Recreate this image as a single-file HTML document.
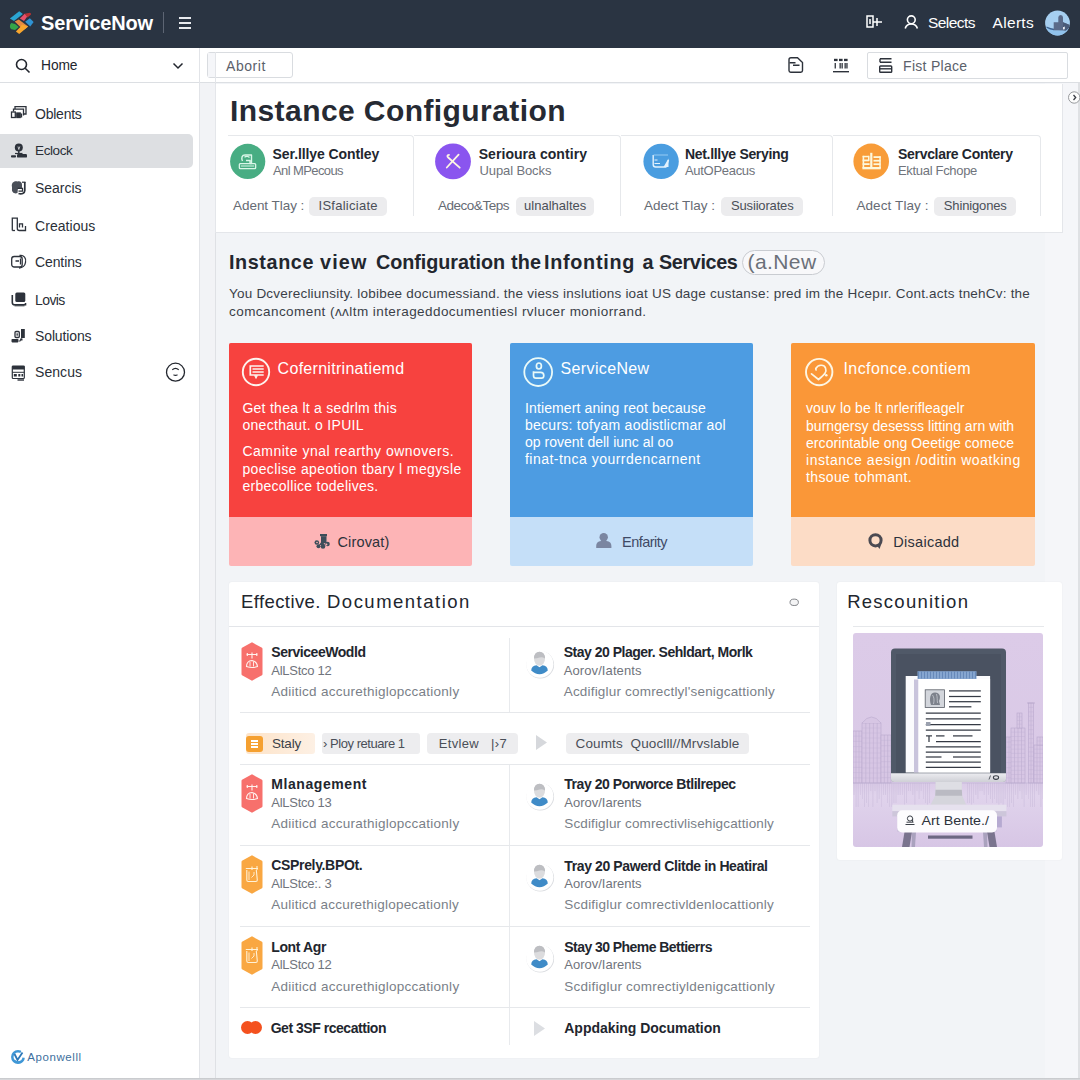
<!DOCTYPE html>
<html><head><meta charset="utf-8">
<style>
*{box-sizing:border-box;margin:0;padding:0}
html,body{width:1080px;height:1080px;overflow:hidden;background:#f2f4f7;font-family:"Liberation Sans",sans-serif;color:#22262e}
div,span,svg{position:absolute}
.t{white-space:nowrap;line-height:20px;margin-top:-10px}
#hdr{left:0;top:0;width:1080px;height:48px;background:#2a3442;z-index:5}
#side{left:0;top:47px;width:200px;height:1033px;background:#fff;border-right:1px solid #e2e4e8}
#strip{left:200px;top:83px;width:16px;height:997px;background:#f2f3f6;border-right:1px solid #dfe1e5}
#bot{left:0;top:1078px;width:1080px;height:2px;background:linear-gradient(#c4c6c9,#dcdde0);z-index:9}
#rstrip{left:1045px;top:83px;width:35px;height:997px;background:#f5f6f9;border-right:2px solid #dfe1e4}
#tool{left:200px;top:47px;width:880px;height:36px;background:#fff;border-bottom:1px solid #dcdfe3}
.nav{left:35px;font-size:14px;color:#2a2f38}
.card{background:#fff}
</style></head><body>
<!--HEADER-->
<div id="hdr">
  <svg style="left:0;top:0" width="44" height="44" viewBox="0 0 44 44">
    <path d="M9.900 18.400 L19.200 11.200 L22.900 14 L14 21 Z" fill="#2aa5d2"/>
    <path d="M19.900 18.400 L24.700 13.800 L27.500 16.200 L24 21 Z" fill="#e8506a"/>
    <path d="M24.700 13.800 L29.900 12.700 Q31.400 13.200 31 14.400 L27.500 17.500 Z" fill="#b93232"/>
    <path d="M25.100 21.800 L29.900 18.300 L33.600 22.100 L30.300 26.600 Z" fill="#2f93d3"/>
    <path d="M9.900 26.200 Q10 23.500 11.400 22.900 L15.100 24 L18.800 27 L15.100 29.900 L11.400 29.200 Q9.800 28 9.900 26.200 Z" fill="#35a548"/>
    <path d="M14.700 21.400 L18.800 19.600 L28.100 26.600 L24.500 29.500 L20.300 27 Z" fill="#e58a42"/>
    <path d="M28.100 26.600 L19.200 34 L15.900 31.400 L20.300 27 L22 24.500 Z" fill="#f8a62e"/>
  </svg>
  <span class="t" style="left:41.0px;top:23.3px;font-size:20px;font-weight:bold;color:#fff;letter-spacing:-0.139px">ServiceNow</span>
  <div style="left:163px;top:12px;width:1px;height:21px;background:#5d6573"></div>
  <div style="left:179px;top:17px;width:12px;height:2px;background:#e8eaee"></div>
  <div style="left:179px;top:22px;width:12px;height:2px;background:#e8eaee"></div>
  <div style="left:179px;top:27px;width:12px;height:2px;background:#e8eaee"></div>
  <svg style="left:866px;top:15px" width="18" height="14" viewBox="0 0 18 14" fill="none" stroke="#fff" stroke-width="1.5"><path d="M1 1 H7 V12 H1 Z M4 4 V9 M7 7 H11 M11 3 V11 M11 7 H16"/></svg>
  <svg style="left:904px;top:14px" width="15" height="16" viewBox="0 0 15 16" fill="none" stroke="#fff" stroke-width="1.6"><circle cx="7.3" cy="5.8" r="3.9"/><path d="M1.2 14.500 C2.2 11 4.500 10 7.3 10 C10.1 10 12.4 11 13.4 14.500"/></svg>
  <span class="t" style="left:928.0px;top:22.5px;font-size:15.500px;color:#fff;letter-spacing:-0.549px">Selects</span>
  <span class="t" style="left:992.6px;top:22.5px;font-size:15.500px;color:#fff;letter-spacing:0.296px">Alerts</span>
  <svg style="left:1044px;top:10px" width="27" height="27" viewBox="0 0 27 27"><defs><clipPath id="avc"><circle cx="13.500" cy="13" r="12.400"/></clipPath></defs><g clip-path="url(#avc)"><rect width="27" height="27" fill="#a6cff0"/><path d="M1 17 Q8 20 14 20.500 L26 18 V27 H1 Z" fill="#90c2ec"/><path d="M2.500 16.600 Q7 18.600 10 18.800 L10 20.300 Q6 20 2.500 17.800 Z" fill="#3d6290"/><path d="M9.700 20.300 V12.300 H14.300 V7.500 Q14.300 5 16.700 5 Q19 5 19 7.500 V12.300 L24.500 14.500 L26 17 L22 20.500 Z" fill="#5a6a88"/><path d="M19 12.300 L26 15 V17.500 L21.500 20.500 L19 20 Z" fill="#4a5b78"/><path d="M19 17.300 L20.800 16.600 L20.800 19.300 L19 19.600 Z" fill="#eef2f7"/></g></svg>
  </div>
</div>
<!--SIDEBAR-->
<div id="side">
  <div style="left:0;top:0;width:199px;height:36px;border-bottom:1px solid #dcdfe3"></div>
  <svg style="left:15px;top:11px" width="16" height="16" viewBox="0 0 16 16" fill="none" stroke="#22262e" stroke-width="1.6"><circle cx="6.5" cy="6.5" r="5"/><path d="M10.200 10.200 L14.500 14.500"/></svg>
  <span class="t" style="left:41.1px;top:19.0px;font-size:13.8px;color:#22262e;letter-spacing:-0.153px">Home</span>
  <svg style="left:172px;top:15px" width="12" height="8" viewBox="0 0 12 8" fill="none" stroke="#22262e" stroke-width="1.5"><path d="M1.500 1.500 L6 6 L10.500 1.500"/></svg>

  <div style="left:0;top:87px;width:193px;height:34px;background:#dddfe2;border-radius:0 5px 5px 0"></div>
  <span class="t nav" style="top:66.7px;letter-spacing:-0.236px">Oblents</span>
  <span class="t nav" style="top:104.3px;font-size:13.5px;letter-spacing:-0.378px">Eclock</span>
  <span class="t nav" style="top:141.0px;letter-spacing:-0.012px">Searcis</span>
  <span class="t nav" style="top:178.5px;letter-spacing:0.053px">Creatious</span>
  <span class="t nav" style="top:215.2px;letter-spacing:-0.110px">Centins</span>
  <span class="t nav" style="top:252.6px;letter-spacing:-0.597px">Lovis</span>
  <span class="t nav" style="top:289.3px;letter-spacing:-0.122px">Solutions</span>
  <span class="t nav" style="top:325.4px;letter-spacing:0.066px">Sencus</span>
<!--NAVICONS-->
  <svg style="left:10px;top:58px" width="18" height="16" viewBox="0 0 18 16" fill="none" stroke="#2d323b" stroke-width="1.300"><path d="M5 4 V1.700 H16 V9 H13.500"/><path d="M3.500 6.500 V4.200 H13.500 V10.500"/><rect x="1.500" y="7" width="3.800" height="5.500"/><rect x="6.800" y="8" width="3.400" height="4.500" fill="#2d323b"/><path d="M11.500 12.500 V8.500"/></svg>
  <svg style="left:10px;top:95px" width="18" height="18" viewBox="0 0 18 18"><circle cx="8.800" cy="5.600" r="4" fill="#2d323b"/><path d="M8 4.500 L8.800 7.500 L9.800 4.500" fill="none" stroke="#dddfe2" stroke-width="0.8"/><path d="M8.800 9 V12" stroke="#2d323b" stroke-width="1.500"/><rect x="7" y="12" width="10" height="3.600" rx="1.200" fill="#2d323b"/><rect x="1" y="13.200" width="5" height="2.400" rx="0.800" fill="#2d323b"/><path d="M5 11.500 H12.500" stroke="#2d323b" stroke-width="1.200"/></svg>
  <svg style="left:10px;top:132px" width="18" height="18" viewBox="0 0 18 18"><path d="M2 8 C1 4 4 1.500 7.500 2.500 C10 1.500 12.500 3.500 12 6.500 L12 9 L8 9 L7.500 14 C4.500 15.500 1.500 13 2 10 Z" fill="#4a4f58"/><path d="M14.800 3 V11.500 C14.800 14.500 11.500 15.500 8.500 14.500" fill="none" stroke="#2d323b" stroke-width="1.700"/><path d="M7.500 9.300 H12.500 V12.200 H8.500" fill="none" stroke="#2d323b" stroke-width="1.300"/><path d="M12 3.200 H15.500" stroke="#2d323b" stroke-width="1.200"/></svg>
  <svg style="left:10px;top:169px" width="18" height="18" viewBox="0 0 18 18" fill="none" stroke="#2d323b" stroke-width="1.300"><path d="M2.300 14.500 V2.200 H7.300 V12.500 Q7.300 14.500 9.300 14.500 H15.500 V10"/><path d="M2.300 14.500 H5"/><path d="M9.500 11.500 V7.800 H12.500 V11.500"/></svg>
  <svg style="left:10px;top:206px" width="18" height="18" viewBox="0 0 18 18" fill="none" stroke="#2d323b" stroke-width="1.300"><rect x="1.700" y="3.500" width="10.500" height="10.500" rx="2.500"/><path d="M9.500 2.500 C14 2 16.500 5 15.500 9.500 C15 12.500 12.500 14.800 9 15"/><path d="M5.500 8 H9 M10.500 5.500 V11.500"/></svg>
  <svg style="left:10px;top:243px" width="18" height="18" viewBox="0 0 18 18"><rect x="5.300" y="2.500" width="10" height="9.500" rx="1.500" fill="#2d323b"/><path d="M2.300 5 V12.500 Q2.300 14.800 4.600 14.800 H15.500 V13" fill="none" stroke="#2d323b" stroke-width="1.600"/><path d="M4.500 15.800 H14.500" stroke="#2d323b" stroke-width="1"/></svg>
  <svg style="left:10px;top:280px" width="18" height="18" viewBox="0 0 18 18"><rect x="11" y="2" width="3.800" height="9" fill="#2d323b"/><rect x="5" y="4.500" width="4.300" height="6" rx="1" fill="none" stroke="#2d323b" stroke-width="1.300"/><rect x="6.500" y="6.300" width="1.300" height="2.400" fill="#2d323b"/><rect x="1.500" y="12" width="7" height="3.400" rx="0.800" fill="#2d323b"/><path d="M9.500 14.500 L11.500 11.500" stroke="#2d323b" stroke-width="1.300"/><rect x="10.500" y="11.500" width="2" height="2" fill="#2d323b"/></svg>
  <svg style="left:10px;top:317px" width="18" height="18" viewBox="0 0 18 18"><rect x="2.300" y="2" width="12" height="12.500" rx="0.800" fill="none" stroke="#2d323b" stroke-width="1.200"/><rect x="2.300" y="2" width="12" height="3.500" fill="#2d323b"/><path d="M2.300 8.300 H14.300" stroke="#2d323b" stroke-width="1"/><rect x="3.800" y="10" width="3" height="2.500" fill="#2d323b"/><rect x="8.300" y="10" width="2" height="2.500" fill="#2d323b"/><rect x="11.500" y="10" width="1.600" height="2.500" fill="#2d323b"/><path d="M7.500 16 H14" stroke="#2d323b" stroke-width="1.400"/></svg>
  <svg style="left:165px;top:315px" width="21" height="21" viewBox="0 0 21 21" fill="none" stroke="#22262e" stroke-width="1.300"><circle cx="10.500" cy="10.200" r="9"/><path d="M7.300 7.800 Q10.500 5 13.700 7.800" stroke-width="1.200"/><path d="M8.500 12.800 Q10.500 14 12.500 12.800" stroke-width="1.200"/></svg>
  <svg style="left:10px;top:1002px" width="16" height="16" viewBox="0 0 16 16"><circle cx="8" cy="8" r="5.700" fill="none" stroke="#3f97d6" stroke-width="2.500"/><path d="M8 8 L12 1 L16 4 L16 9 Z" fill="#fff"/><path d="M4.500 5 L7.500 11 L12.500 3.500" fill="none" stroke="#2d78b8" stroke-width="1.800"/><path d="M4 11.500 Q7 14.500 11 12.500" fill="none" stroke="#3f97d6" stroke-width="2"/></svg>
  <span class="t" style="left:27.2px;top:1009.7px;font-size:11.500px;color:#3d6f9e;letter-spacing:0.585px">Aponwelll</span>
</div>
<!--TOOLBAR-->
<div id="tool">
  <div style="left:7px;top:5px;width:86px;height:26px;border:1px solid #d9dce0;border-radius:3px"></div><div style="left:8px;top:6px;width:8px;height:24px;background:#f5f6f9"></div><div style="left:15px;top:5px;width:1px;height:31px;background:#e3e5e9"></div>
  <span class="t" style="left:26.0px;top:18.7px;font-size:14px;color:#5b616b;letter-spacing:0.570px">Aborit</span>
  <div style="left:667px;top:5px;width:201px;height:27px;border:1px solid #d9dce0;border-radius:2px"></div>
  <span class="t" style="left:703.1px;top:18.8px;font-size:14px;color:#5b616b;letter-spacing:0.283px">Fist Place</span>
  <svg style="left:587px;top:9px" width="18" height="18" viewBox="0 0 18 18" fill="none" stroke="#2d323b" stroke-width="1.400"><path d="M2 3.800 Q2 1.800 4 1.800 H10.500 L15.500 6.500 V14.500 Q15.500 16.200 13.800 16.200 H3.700 Q2 16.200 2 14.500 Z"/><path d="M2.500 6.700 H8.500 M6 9.300 H12.500"/></svg>
  <svg style="left:632px;top:10px" width="18" height="18" viewBox="0 0 18 18" fill="#2d323b" stroke="none"><rect x="2" y="1.800" width="3.600" height="2.300"/><rect x="7" y="1.800" width="3.600" height="2.300"/><rect x="12" y="1.800" width="3.600" height="2.300"/><rect x="2.600" y="6" width="1.300" height="5.500"/><rect x="7.500" y="6" width="1.300" height="5.500"/><rect x="9.500" y="6" width="1.300" height="5.500"/><rect x="12.500" y="6" width="1.300" height="5.500"/><rect x="14.300" y="6" width="1.300" height="5.500"/><rect x="1" y="14" width="16" height="1.400"/></svg>
  <svg style="left:678px;top:10px" width="16" height="18" viewBox="0 0 16 18" fill="none" stroke="#2d323b" stroke-width="1.400"><path d="M2 1.800 H13.500 M2 5.300 H13.500 M2 1.800 V5.300"/><rect x="1.700" y="9" width="12" height="6.300" rx="0.800"/><path d="M1.700 11.800 H13.700"/></svg>
</div>
<div id="strip"></div>
<div id="rstrip"></div>
<div id="bot"></div>
<svg style="left:1066px;top:90px;z-index:3" width="14" height="15" viewBox="0 0 14 15"><circle cx="8.200" cy="7.500" r="5.700" fill="#fdfdfd" stroke="#8c8e92" stroke-width="0.900"/><path d="M7.500 5 L9.700 7.500 L7.500 10" fill="none" stroke="#3a3d44" stroke-width="1.300"/></svg>
<!--MAIN-->
<div class="card" style="left:215px;top:84px;width:848px;height:149px;border:1px solid #e4e6ea;border-top:none"></div>
<span class="t" style="left:230.0px;top:111.0px;font-size:30px;font-weight:bold;color:#262a33;letter-spacing:0.423px">Instance Configuration</span>
<!--STATS-->
<div style="left:228px;top:135px;width:186px;height:81px;border-top:1px solid #e6e8eb;border-right:1px solid #e6e8eb;border-radius:0 4px 0 0"></div>
<div style="left:414px;top:135px;width:207px;height:81px;border-top:1px solid #e6e8eb;border-right:1px solid #e6e8eb;border-radius:0 4px 0 0"></div>
<div style="left:621px;top:135px;width:212px;height:81px;border-top:1px solid #e6e8eb;border-right:1px solid #e6e8eb;border-radius:0 4px 0 0"></div>
<div style="left:833px;top:135px;width:208px;height:81px;border-top:1px solid #e6e8eb;border-right:1px solid #e6e8eb;border-radius:0 4px 0 0"></div>

<svg style="left:229px;top:143px" width="37" height="37" viewBox="0 0 37 37"><circle cx="18.700" cy="18.400" r="17.600" fill="#48ad83"/><g fill="none" stroke="#d9f6e8" stroke-width="1.400" stroke-linejoin="round"><rect x="10.400" y="20.600" width="16.200" height="5" rx="0.800"/><path d="M13.500 18 C12 15 13 12 16 12 H22.500 V20.500 H21 V17.500 H17"/><path d="M15.500 14.300 C17 13 19.500 13.200 20.500 14.500"/></g><rect x="12" y="22" width="13" height="2" fill="#8fd3b5"/></svg>
<span class="t" style="left:272.6px;top:153.5px;font-size:14px;font-weight:bold;color:#22262e;letter-spacing:-0.087px">Ser.lllye Contley</span>
<span class="t" style="left:273.0px;top:171.0px;font-size:13px;color:#70747c;letter-spacing:-0.599px">Anl MPecous</span>
<span class="t" style="left:233.0px;top:206.0px;font-size:13.500px;color:#666b74;letter-spacing:-0.041px">Adent Tlay :</span>
<div style="left:309px;top:197px;width:78px;height:19px;border-radius:5px;background:#ececee"></div>
<span class="t" style="left:318.5px;top:206.0px;font-size:13px;color:#4a4f58;letter-spacing:0.266px">ISfaliciate</span>

<svg style="left:434px;top:143px" width="38" height="37" viewBox="0 0 38 37"><circle cx="19" cy="18.400" r="17.900" fill="#8a55ef"/><g fill="none" stroke="#fdf6e2" stroke-width="1.800" stroke-linecap="round"><path d="M12.800 24.500 L24.600 11.700"/><path d="M15 11.800 C13 12 13 13.500 14.200 14.500 L25.700 24.700"/></g></svg>
<span class="t" style="left:478.7px;top:153.5px;font-size:14px;font-weight:bold;color:#22262e;letter-spacing:0.058px">Serioura contiry</span>
<span class="t" style="left:479.5px;top:171.0px;font-size:13px;color:#70747c;letter-spacing:-0.108px">Uupal Bocks</span>
<span class="t" style="left:438.0px;top:206.0px;font-size:13.500px;color:#666b74;letter-spacing:-0.481px">Adeco&amp;Teps</span>
<div style="left:516px;top:197px;width:78px;height:19px;border-radius:5px;background:#ececee"></div>
<span class="t" style="left:524.0px;top:206.0px;font-size:13px;color:#4a4f58;letter-spacing:0.013px">ulnalhaltes</span>

<svg style="left:642px;top:143px" width="38" height="37" viewBox="0 0 38 37"><circle cx="19.100" cy="18.400" r="17.700" fill="#4a9de0"/><g fill="none" stroke="#e3f2fd" stroke-width="1.400" stroke-linejoin="round"><path d="M11.200 12 V21.500 Q11.200 24 13.700 24 H24 L26.500 17"/><path d="M11.500 12 H26" stroke-width="0.900" stroke="#9fd0f5"/><path d="M12.500 17 H15.500 M12.500 20.500 H18" stroke-width="1.100"/><path d="M26.500 15.500 V24 H21.500 Z" fill="#e3f2fd" stroke="none"/></g></svg>
<span class="t" style="left:685.0px;top:153.5px;font-size:14px;font-weight:bold;color:#22262e;letter-spacing:-0.320px">Net.lllye Serying</span>
<span class="t" style="left:685.0px;top:171.0px;font-size:13px;color:#70747c;letter-spacing:-0.300px">AutOPeacus</span>
<span class="t" style="left:644.0px;top:206.0px;font-size:13.500px;color:#666b74;letter-spacing:-0.004px">Adect Tlay :</span>
<div style="left:721px;top:197px;width:82px;height:19px;border-radius:5px;background:#ececee"></div>
<span class="t" style="left:731.0px;top:206.0px;font-size:13px;color:#4a4f58;letter-spacing:-0.165px">Susiiorates</span>

<svg style="left:852px;top:143px" width="38" height="37" viewBox="0 0 38 37"><circle cx="19.200" cy="18.400" r="17.800" fill="#f89c38"/><g fill="#fdf8dc"><rect x="18.200" y="9.800" width="2.200" height="15.500"/><rect x="10.400" y="24" width="18.400" height="2.300"/><rect x="10.600" y="12.800" width="1.600" height="12"/><rect x="10.600" y="12.800" width="6.200" height="1.500"/><rect x="10.600" y="16.500" width="6.600" height="1.800"/><rect x="10.600" y="20.200" width="7" height="1.800"/><rect x="16" y="12.800" width="1.500" height="5"/><rect x="21.500" y="13.200" width="7" height="1.800"/><rect x="21.500" y="16.800" width="7" height="1.800"/><rect x="21.500" y="20.300" width="7" height="1.800"/><rect x="27.300" y="13.200" width="1.500" height="12"/></g></svg>
<span class="t" style="left:898.0px;top:153.5px;font-size:14px;font-weight:bold;color:#22262e;letter-spacing:-0.308px">Servclare Contery</span>
<span class="t" style="left:898.0px;top:171.0px;font-size:13px;color:#70747c;letter-spacing:-0.316px">Ektual Fchope</span>
<span class="t" style="left:856.4px;top:206.0px;font-size:13.500px;color:#666b74;letter-spacing:0.104px">Adect Tlay :</span>
<div style="left:934px;top:197px;width:82px;height:19px;border-radius:5px;background:#ececee"></div>
<span class="t" style="left:943.8px;top:206.0px;font-size:13px;color:#4a4f58;letter-spacing:-0.143px">Shinigones</span>
<!--SECTION2-->
<span class="t" style="left:229.0px;top:262.0px;font-size:19.8px;font-weight:bold;color:#22262e;letter-spacing:0.592px">Instance</span>
<span class="t" style="left:320.0px;top:262.0px;font-size:19.8px;font-weight:bold;color:#22262e;letter-spacing:1.152px">view</span>
<span class="t" style="left:376.0px;top:262.0px;font-size:19.8px;font-weight:bold;color:#22262e;letter-spacing:-0.050px">Configuration</span>
<span class="t" style="left:511.0px;top:262.0px;font-size:19.8px;font-weight:bold;color:#22262e;letter-spacing:0.109px">the</span>
<span class="t" style="left:544.0px;top:262.0px;font-size:19.8px;font-weight:bold;color:#22262e;letter-spacing:0.712px">Infonting</span>
<span class="t" style="left:642.5px;top:262.0px;font-size:19.8px;font-weight:bold;color:#22262e;letter-spacing:-1.016px">a</span>
<span class="t" style="left:659.0px;top:262.0px;font-size:19.8px;font-weight:bold;color:#22262e;letter-spacing:-0.363px">Services</span>
<div style="left:742px;top:250px;width:83px;height:25px;border:1px solid #c9ccd1;border-radius:13px;background:#f8f8fa"></div>
<span class="t" style="left:747.5px;top:262.0px;font-size:21px;color:#6b7079;letter-spacing:0.411px">(a.New</span>
<span class="t" style="left:229.0px;top:294.2px;font-size:13.5px;color:#3a3f48;letter-spacing:0.214px">You Dcverecliunsity. lobibee documessiand. the viess inslutions ioat US dage custanse: pred im the Hcepır. Cont.acts tnehCv: the</span>
<span class="t" style="left:229.0px;top:311.8px;font-size:13.5px;color:#3a3f48;letter-spacing:0.436px">comcancoment (ʌʌltm interageddocumentiesl rvlucer moniorrand.</span>
<!--CARDS-->
<div style="left:229px;top:343px;width:243px;height:223px;border-radius:2px;background:#fdb4b6;overflow:hidden"><div style="left:0;top:0;width:243px;height:174px;background:#f7423f"></div></div>
<div style="left:510px;top:343px;width:243px;height:223px;border-radius:2px;background:#c5dff8;overflow:hidden"><div style="left:0;top:0;width:243px;height:174px;background:#4d9ce2"></div></div>
<div style="left:791px;top:343px;width:244px;height:223px;border-radius:2px;background:#fcdcc6;overflow:hidden"><div style="left:0;top:0;width:244px;height:174px;background:#fa9738"></div></div>

<svg style="left:240px;top:356px" width="32" height="32" viewBox="0 0 32 32"><circle cx="16" cy="16" r="13.200" fill="none" stroke="#fdf3ee" stroke-width="1.900"/><g fill="none" stroke="#fdf3ee" stroke-width="1.700"><path d="M23.700 10 H10.300 V19 H23.700"/><path d="M12.500 13 H23.700 M12.500 16 H23.700" stroke-width="1.400"/><path d="M14.500 19.500 L16 22.500 L17.500 19.500 Z" fill="#fdf3ee" stroke-width="0.800"/></g></svg>
<span class="t" style="left:277.6px;top:369.0px;font-size:16px;color:#fff;letter-spacing:0.292px">Cofernitrinatiemd</span>
<span class="t" style="left:242.4px;top:408.3px;font-size:14px;color:#fff;letter-spacing:0.270px">Get thea lt a sedrlm this</span>
<span class="t" style="left:242.4px;top:425.3px;font-size:14px;color:#fff;letter-spacing:0.307px">onecthaut. o IPUIL</span>
<span class="t" style="left:242.4px;top:451.0px;font-size:14px;color:#fff;letter-spacing:0.497px">Camnite ynal rearthy ownovers.</span>
<span class="t" style="left:242.4px;top:468.5px;font-size:14px;color:#fff;letter-spacing:0.369px">poeclise apeotion tbary l megysle</span>
<span class="t" style="left:242.4px;top:486.0px;font-size:14px;color:#fff;letter-spacing:0.279px">erbecollice todelives.</span>
<span class="t" style="left:337.5px;top:542.0px;font-size:14.500px;color:#2d323b;letter-spacing:0.142px">Cirovat)</span>
<svg style="left:313px;top:533px" width="18" height="17" viewBox="0 0 18 17" fill="#3d4e5a"><rect x="7" y="1" width="7" height="2.200"/><rect x="8" y="3.200" width="5.500" height="7" /><circle cx="3.800" cy="9.500" r="2.300"/><circle cx="5.500" cy="13.300" r="2"/><circle cx="10" cy="13.500" r="2.300"/><circle cx="14.500" cy="11" r="2.300"/><path d="M6 12 L9 8 L12 12 Z"/><circle cx="13.500" cy="11.500" r="0.900" fill="#fdb3b6"/><circle cx="4" cy="9.500" r="0.800" fill="#fdb3b6"/></svg>

<svg style="left:522px;top:356px" width="33" height="33" viewBox="0 0 33 33"><circle cx="16.200" cy="16.100" r="13.900" fill="none" stroke="#eafaf8" stroke-width="1.800"/><g fill="none" stroke="#eafaf8" stroke-width="1.700"><ellipse cx="16.900" cy="10" rx="2.500" ry="3"/><path d="M11.500 15.200 V19.500 Q11.500 22.200 14 22.200 H19.500 Q21.800 22.200 21.800 19.500 Q21.800 16.300 18.500 16.300 H12"/></g></svg>
<span class="t" style="left:560.6px;top:369.0px;font-size:16px;color:#fff;letter-spacing:0.354px">ServiceNew</span>
<span class="t" style="left:525.0px;top:408.3px;font-size:14px;color:#fff;letter-spacing:0.120px">Intiemert aning reot because</span>
<span class="t" style="left:525.0px;top:425.2px;font-size:14px;color:#fff;letter-spacing:0.259px">becurs: tofyam aodistlicmar aol</span>
<span class="t" style="left:525.0px;top:442.2px;font-size:14px;color:#fff;letter-spacing:0.013px">op rovent dell iunc al oo</span>
<span class="t" style="left:525.0px;top:459.3px;font-size:14px;color:#fff;letter-spacing:0.472px">finat-tnca yourrdencarnent</span>
<span class="t" style="left:622.0px;top:542.0px;font-size:14.500px;color:#3f4a66;letter-spacing:-0.521px">Enfarity</span>
<svg style="left:595px;top:532px" width="18" height="17" viewBox="0 0 18 17" fill="#7b86a1"><circle cx="8.700" cy="5.300" r="4.200"/><path d="M1.200 16 V14 Q1.200 9.500 6 9 H11.500 Q16.400 9.500 16.400 14 V16 Z"/></svg>

<svg style="left:803px;top:356px" width="33" height="33" viewBox="0 0 33 33"><circle cx="16.200" cy="16.100" r="13.200" fill="none" stroke="#fdf6e4" stroke-width="1.900"/><g fill="none" stroke="#fdf6e4" stroke-width="1.700" stroke-linecap="round" stroke-linejoin="round"><path d="M8.500 17.800 L15.500 23.500 C22 18 24 16 22.500 12 C21 8 15 8.500 12.800 12.500 L13 14"/></g><circle cx="23.300" cy="19.200" r="1.300" fill="#fdf6e4"/></svg>
<span class="t" style="left:843.5px;top:369.0px;font-size:16px;color:#fff;letter-spacing:0.409px">Incfonce.contiem</span>
<span class="t" style="left:806.0px;top:408.3px;font-size:14px;color:#fff;letter-spacing:0.099px">vouv lo be lt nrlerifleagelr</span>
<span class="t" style="left:806.0px;top:425.5px;font-size:14px;color:#fff;letter-spacing:0.035px">burngersy desesss litting arn with</span>
<span class="t" style="left:806.0px;top:442.6px;font-size:14px;color:#fff;letter-spacing:0.063px">ercorintable ong Oeetige comece</span>
<span class="t" style="left:806.0px;top:460.0px;font-size:14px;color:#fff;letter-spacing:0.532px">instance aesign /oditin woatking</span>
<span class="t" style="left:806.0px;top:477.0px;font-size:14px;color:#fff;letter-spacing:0.373px">thsoue tohmant.</span>
<span class="t" style="left:893.3px;top:542.0px;font-size:14.500px;color:#2d323b;letter-spacing:0.270px">Disaicadd</span>
<svg style="left:866px;top:531px" width="19" height="20" viewBox="0 0 19 20"><circle cx="9.500" cy="9.300" r="5.600" fill="none" stroke="#4b4a52" stroke-width="3"/><path d="M11 14.500 L13.500 18 L15.500 12.500 Z" fill="#4b4a52"/></svg>
<!--DOC-->
<div class="card" style="left:229px;top:582px;width:590px;height:476px;border-radius:3px;box-shadow:0 0 2px rgba(0,0,0,0.06)"></div>
<span class="t" style="left:241.0px;top:601.6px;font-size:18.5px;color:#22262e;letter-spacing:0.403px">Effective.</span>
<span class="t" style="left:327.0px;top:601.6px;font-size:18.5px;color:#22262e;letter-spacing:1.489px">Documentation</span>
<svg style="left:787px;top:596px" width="15" height="14" viewBox="0 0 15 14"><ellipse cx="7.300" cy="8.300" rx="3.800" ry="1.800" fill="#d9dadd"/><ellipse cx="7.200" cy="6.300" rx="4.200" ry="3.200" fill="#f4f4f5" stroke="#85878c" stroke-width="1"/></svg>
<div style="left:229px;top:626px;width:590px;height:1px;background:#e3e5e9"></div>
<div style="left:509px;top:638px;width:1px;height:74px;background:#e8eaed"></div>
<div style="left:509px;top:765px;width:1px;height:280px;background:#e8eaed"></div>
<div style="left:240px;top:712px;width:570px;height:1px;background:#e6e8eb"></div>
<div style="left:240px;top:764px;width:570px;height:1px;background:#e6e8eb"></div>
<div style="left:240px;top:845px;width:570px;height:1px;background:#e6e8eb"></div>
<div style="left:240px;top:926px;width:570px;height:1px;background:#e6e8eb"></div>
<div style="left:240px;top:1007px;width:570px;height:1px;background:#e6e8eb"></div>
<svg style="left:240.500px;top:642px" width="22" height="39" viewBox="0 0 22 39"><path d="M11 0.300 L21 5.800 Q21.500 6.100 21.500 7 V32 Q21.500 32.800 21 33.200 L11 38.700 L1 33.200 Q0.500 32.800 0.500 32 V7 Q0.500 6.100 1 5.800 Z" fill="#f7706c"/><g fill="none" stroke="#fff3ef" stroke-width="1.100"><path d="M5.500 12.500 H16.500 M11 10.500 V16.500 M6.300 11 V14 M15.800 11 V14"/><path d="M5.500 24.500 Q5.500 19 11 18.500 Q16 19.500 16.500 24.500 Q11 26.500 5.500 24.500 Z"/><path d="M9 20 V24.500 M12.500 19.500 V24.500" stroke-width="0.900"/></g></svg>
<span class="t" style="left:271.3px;top:652.0px;font-size:14px;font-weight:bold;color:#22262e;letter-spacing:-0.456px">ServiceeWodld</span>
<span class="t" style="left:271.3px;top:671.0px;font-size:13px;color:#70747c;letter-spacing:-0.278px">AlLStco 12</span>
<span class="t" style="left:271.3px;top:691.7px;font-size:13.500px;color:#7a7f88;letter-spacing:0.258px">Adiiticd accurethiglopccationly</span>
<svg style="left:524px;top:648px" width="32" height="32" viewBox="0 0 32 32"><circle cx="16.300" cy="16.700" r="13.800" fill="#d9dbdf"/><circle cx="15.800" cy="16.200" r="13.600" fill="#fff"/><ellipse cx="15.500" cy="10.800" rx="5.500" ry="7" fill="#dcdcde"/><path d="M10 10.500 Q10 3.800 15.500 3.800 Q21 3.800 21 10.500 Q18 8.500 15.500 9.500 Q13 10.500 10 10.500 Z" fill="#bdbec2"/><path d="M7.200 22.500 Q7.500 17.500 12.500 17.300 L15.500 19.300 L18.500 17.300 Q23.500 17.500 23.800 22.500 Q20 26.200 15.500 26.200 Q11 26.200 7.200 22.500 Z" fill="#3f8bc7"/></svg>
<span class="t" style="left:563.7px;top:652.0px;font-size:14px;font-weight:bold;color:#22262e;letter-spacing:-0.490px">Stay 20 Plager. Sehldart, Morlk</span>
<span class="t" style="left:563.7px;top:671.0px;font-size:13px;color:#70747c;letter-spacing:0.099px">Aorov/Iatents</span>
<span class="t" style="left:563.7px;top:691.7px;font-size:13.500px;color:#7a7f88;letter-spacing:0.191px">Acdifiglur comrectlyl'senigcattionly</span>
<svg style="left:240.500px;top:774px" width="22" height="39" viewBox="0 0 22 39"><path d="M11 0.300 L21 5.800 Q21.500 6.100 21.500 7 V32 Q21.500 32.800 21 33.200 L11 38.700 L1 33.200 Q0.500 32.800 0.500 32 V7 Q0.500 6.100 1 5.800 Z" fill="#f7706c"/><g fill="none" stroke="#fff3ef" stroke-width="1.100"><path d="M5.500 12.500 H16.500 M11 10.500 V16.500 M6.300 11 V14 M15.800 11 V14"/><path d="M5.500 24.500 Q5.500 19 11 18.500 Q16 19.500 16.500 24.500 Q11 26.500 5.500 24.500 Z"/><path d="M9 20 V24.500 M12.500 19.500 V24.500" stroke-width="0.900"/></g></svg>
<span class="t" style="left:271.3px;top:783.7px;font-size:14px;font-weight:bold;color:#22262e;letter-spacing:0.566px">Mlanagement</span>
<span class="t" style="left:271.3px;top:803.0px;font-size:13px;color:#70747c;letter-spacing:-0.278px">AlLStco 13</span>
<span class="t" style="left:271.3px;top:824.3px;font-size:13.500px;color:#7a7f88;letter-spacing:0.258px">Adiiticd accurathiglopccationly</span>
<svg style="left:524px;top:780px" width="32" height="32" viewBox="0 0 32 32"><circle cx="16.300" cy="16.700" r="13.800" fill="#d9dbdf"/><circle cx="15.800" cy="16.200" r="13.600" fill="#fff"/><ellipse cx="15.500" cy="10.800" rx="5.500" ry="7" fill="#dcdcde"/><path d="M10 10.500 Q10 3.800 15.500 3.800 Q21 3.800 21 10.500 Q18 8.500 15.500 9.500 Q13 10.500 10 10.500 Z" fill="#bdbec2"/><path d="M7.200 22.500 Q7.500 17.500 12.500 17.300 L15.500 19.300 L18.500 17.300 Q23.500 17.500 23.800 22.500 Q20 26.200 15.500 26.200 Q11 26.200 7.200 22.500 Z" fill="#3f8bc7"/></svg>
<span class="t" style="left:564.3px;top:783.7px;font-size:14px;font-weight:bold;color:#22262e;letter-spacing:-0.457px">Tray 20 Porworce Btlilrepec</span>
<span class="t" style="left:564.3px;top:803.0px;font-size:13px;color:#70747c;letter-spacing:-0.002px">Aorov/Iarents</span>
<span class="t" style="left:564.3px;top:824.3px;font-size:13.500px;color:#7a7f88;letter-spacing:0.135px">Scdifiglur comrectivlisehigcattionly</span>
<svg style="left:240.500px;top:855px" width="22" height="39" viewBox="0 0 22 39"><path d="M11 0.300 L21 5.800 Q21.500 6.100 21.500 7 V32 Q21.500 32.800 21 33.200 L11 38.700 L1 33.200 Q0.500 32.800 0.500 32 V7 Q0.500 6.100 1 5.800 Z" fill="#f9a742"/><g fill="none" stroke="#fff2d8" stroke-width="1.100"><path d="M4.800 13.500 H17 M11 11.500 V15 M16 11 V15"/><path d="M5.800 15 V25 Q5.800 26.500 7.300 26.500 H14.800 Q16.300 26.500 16.300 25 L15.300 15"/><path d="M8 16.500 V25 M10.500 22.500 L13 20 V17" stroke-width="0.900"/></g></svg>
<span class="t" style="left:271.3px;top:865.2px;font-size:14px;font-weight:bold;color:#22262e;letter-spacing:-0.341px">CSPrely.BPOt.</span>
<span class="t" style="left:271.3px;top:883.9px;font-size:13px;color:#70747c;letter-spacing:-0.252px">AlLStce:. 3</span>
<span class="t" style="left:271.3px;top:905.2px;font-size:13.500px;color:#7a7f88;letter-spacing:0.217px">Auliticd accurethiglopecationly</span>
<svg style="left:524px;top:861px" width="32" height="32" viewBox="0 0 32 32"><circle cx="16.300" cy="16.700" r="13.800" fill="#d9dbdf"/><circle cx="15.800" cy="16.200" r="13.600" fill="#fff"/><ellipse cx="15.500" cy="10.800" rx="5.500" ry="7" fill="#dcdcde"/><path d="M10 10.500 Q10 3.800 15.500 3.800 Q21 3.800 21 10.500 Q18 8.500 15.500 9.500 Q13 10.500 10 10.500 Z" fill="#bdbec2"/><path d="M7.200 22.500 Q7.500 17.500 12.500 17.300 L15.500 19.300 L18.500 17.300 Q23.500 17.500 23.800 22.500 Q20 26.200 15.500 26.200 Q11 26.200 7.200 22.500 Z" fill="#3f8bc7"/></svg>
<span class="t" style="left:564.3px;top:865.5px;font-size:14px;font-weight:bold;color:#22262e;letter-spacing:-0.394px">Tray 20 Pawerd Clitde in Heatiral</span>
<span class="t" style="left:564.3px;top:883.6px;font-size:13px;color:#70747c;letter-spacing:-0.002px">Aorov/Iarents</span>
<span class="t" style="left:564.3px;top:905.2px;font-size:13.500px;color:#7a7f88;letter-spacing:0.203px">Scdifiglur comrectivldenlocattionly</span>
<svg style="left:240.500px;top:936px" width="22" height="39" viewBox="0 0 22 39"><path d="M11 0.300 L21 5.800 Q21.500 6.100 21.500 7 V32 Q21.500 32.800 21 33.200 L11 38.700 L1 33.200 Q0.500 32.800 0.500 32 V7 Q0.500 6.100 1 5.800 Z" fill="#f9a742"/><g fill="none" stroke="#fff2d8" stroke-width="1.100"><path d="M4.800 13.500 H17 M11 11.500 V15 M16 11 V15"/><path d="M5.800 15 V25 Q5.800 26.500 7.300 26.500 H14.800 Q16.300 26.500 16.300 25 L15.300 15"/><path d="M8 16.500 V25 M10.500 22.500 L13 20 V17" stroke-width="0.900"/></g></svg>
<span class="t" style="left:271.3px;top:946.7px;font-size:14px;font-weight:bold;color:#22262e;letter-spacing:-0.389px">Lont Agr</span>
<span class="t" style="left:271.3px;top:965.2px;font-size:13px;color:#70747c;letter-spacing:-0.278px">AlLStco 12</span>
<span class="t" style="left:271.3px;top:986.7px;font-size:13.500px;color:#7a7f88;letter-spacing:0.258px">Adiiticd accurethiglopccationly</span>
<svg style="left:524px;top:942px" width="32" height="32" viewBox="0 0 32 32"><circle cx="16.300" cy="16.700" r="13.800" fill="#d9dbdf"/><circle cx="15.800" cy="16.200" r="13.600" fill="#fff"/><ellipse cx="15.500" cy="10.800" rx="5.500" ry="7" fill="#dcdcde"/><path d="M10 10.500 Q10 3.800 15.500 3.800 Q21 3.800 21 10.500 Q18 8.500 15.500 9.500 Q13 10.500 10 10.500 Z" fill="#bdbec2"/><path d="M7.200 22.500 Q7.500 17.500 12.500 17.300 L15.500 19.300 L18.500 17.300 Q23.500 17.500 23.800 22.500 Q20 26.200 15.500 26.200 Q11 26.200 7.200 22.500 Z" fill="#3f8bc7"/></svg>
<span class="t" style="left:564.3px;top:946.7px;font-size:14px;font-weight:bold;color:#22262e;letter-spacing:-0.553px">Stay 30 Pheme Bettierrs</span>
<span class="t" style="left:564.3px;top:965.2px;font-size:13px;color:#70747c;letter-spacing:-0.002px">Aorov/Iarents</span>
<span class="t" style="left:564.3px;top:986.7px;font-size:13.500px;color:#7a7f88;letter-spacing:0.232px">Scdifiglur comrectiyldenigcattionly</span>
<!--FILTER-->
<div style="left:246px;top:733px;width:69px;height:21px;border-radius:3px;background:linear-gradient(90deg,#fde3c8,#fdf0e4)"></div>
<div style="left:246px;top:736px;width:17px;height:16px;border-radius:3px;background:#f5a030"></div>
<div style="left:251px;top:740px;width:7px;height:1.500px;background:#fff"></div><div style="left:251px;top:743px;width:7px;height:1.500px;background:#fff"></div><div style="left:251px;top:746px;width:7px;height:1.500px;background:#fff"></div>
<span class="t" style="left:272.0px;top:743.5px;font-size:13.500px;color:#3a3f48;letter-spacing:-0.203px">Staly</span>
<div style="left:322px;top:733px;width:98px;height:21px;border-radius:3px;background:#ededef"></div>
<span class="t" style="left:323.0px;top:743.5px;font-size:13px;color:#4a4f58;letter-spacing:-0.455px">› Ploy retuare 1</span>
<div style="left:427px;top:733px;width:91px;height:21px;border-radius:4px;background:#ededef"></div>
<span class="t" style="left:438.7px;top:743.5px;font-size:13px;color:#4a4f58;letter-spacing:0.353px">Etvlew &nbsp; |›7</span>
<svg style="left:536px;top:735px" width="11" height="15" viewBox="0 0 11 15"><path d="M0 0 L11 7.500 L0 15 Z" fill="#d6d8dc"/></svg>
<div style="left:566px;top:733px;width:183px;height:21px;border-radius:4px;background:#ededef"></div>
<span class="t" style="left:575.5px;top:743.5px;font-size:13.500px;color:#4a4f58;letter-spacing:0.129px">Coumts &nbsp;Quoclll//Mrvslable</span>
<!--LAST-->
<div style="left:241px;top:1021px;width:13px;height:13px;border-radius:50%;background:#f4511e"></div>
<div style="left:249px;top:1021px;width:13px;height:13px;border-radius:50%;background:#f4511e"></div>
<span class="t" style="left:270.7px;top:1028.0px;font-size:14px;font-weight:bold;color:#22262e;letter-spacing:-0.467px">Get 3SF rcecattion</span>
<svg style="left:534px;top:1021px" width="11" height="15" viewBox="0 0 11 15"><path d="M0 0 L11 7.500 L0 15 Z" fill="#dcdee2"/></svg>
<span class="t" style="left:564.3px;top:1028.0px;font-size:14px;font-weight:bold;color:#22262e;letter-spacing:-0.036px">Appdaking Documation</span>
<!--RESC-->
<div class="card" style="left:837px;top:582px;width:225px;height:278px;border-radius:3px;box-shadow:0 0 2px rgba(0,0,0,0.06)"></div>
<span class="t" style="left:847.2px;top:602.0px;font-size:18.5px;color:#22262e;letter-spacing:1.254px">Rescounition</span>
<div style="left:853px;top:626px;width:191px;height:1px;background:#e6e8eb"></div>
<!--ILLUS-->
<svg style="left:853px;top:633px" width="190" height="214" viewBox="0 0 190 214">
<defs><linearGradient id="bgG" x1="0" y1="0" x2="0" y2="1"><stop offset="0" stop-color="#dccbe8"/><stop offset="0.68" stop-color="#d9c9e6"/><stop offset="0.76" stop-color="#e0d3ec"/><stop offset="1" stop-color="#d7c6e5"/></linearGradient>
<linearGradient id="chG" x1="0" y1="0" x2="0" y2="1"><stop offset="0" stop-color="#ececf0"/><stop offset="1" stop-color="#cfd0d6"/></linearGradient></defs>
<rect x="0" y="0" width="190" height="214" rx="3" fill="url(#bgG)"/>
<rect x="0" y="98" width="9" height="52" fill="#d7c6e4" stroke="#b9a9cd" stroke-width="0.6"/><path d="M3.0 98 V150" stroke="#b9a9cd" stroke-width="0.5"/><path d="M6.0 98 V150" stroke="#b9a9cd" stroke-width="0.5"/><path d="M0 103.2 H9" stroke="#c0b0d3" stroke-width="0.4"/><path d="M0 108.4 H9" stroke="#c0b0d3" stroke-width="0.4"/><path d="M0 113.6 H9" stroke="#c0b0d3" stroke-width="0.4"/><path d="M0 118.8 H9" stroke="#c0b0d3" stroke-width="0.4"/><path d="M0 124.0 H9" stroke="#c0b0d3" stroke-width="0.4"/><path d="M0 129.2 H9" stroke="#c0b0d3" stroke-width="0.4"/><path d="M0 134.4 H9" stroke="#c0b0d3" stroke-width="0.4"/><path d="M0 139.6 H9" stroke="#c0b0d3" stroke-width="0.4"/><path d="M0 144.8 H9" stroke="#c0b0d3" stroke-width="0.4"/><rect x="9" y="90" width="19" height="60" fill="#d7c6e4" stroke="#b9a9cd" stroke-width="0.6"/><path d="M12.8 90 V150" stroke="#b9a9cd" stroke-width="0.5"/><path d="M16.6 90 V150" stroke="#b9a9cd" stroke-width="0.5"/><path d="M20.4 90 V150" stroke="#b9a9cd" stroke-width="0.5"/><path d="M24.2 90 V150" stroke="#b9a9cd" stroke-width="0.5"/><path d="M9 95.0 H28" stroke="#c0b0d3" stroke-width="0.4"/><path d="M9 100.0 H28" stroke="#c0b0d3" stroke-width="0.4"/><path d="M9 105.0 H28" stroke="#c0b0d3" stroke-width="0.4"/><path d="M9 110.0 H28" stroke="#c0b0d3" stroke-width="0.4"/><path d="M9 115.0 H28" stroke="#c0b0d3" stroke-width="0.4"/><path d="M9 120.0 H28" stroke="#c0b0d3" stroke-width="0.4"/><path d="M9 125.0 H28" stroke="#c0b0d3" stroke-width="0.4"/><path d="M9 130.0 H28" stroke="#c0b0d3" stroke-width="0.4"/><path d="M9 135.0 H28" stroke="#c0b0d3" stroke-width="0.4"/><path d="M9 140.0 H28" stroke="#c0b0d3" stroke-width="0.4"/><path d="M9 145.0 H28" stroke="#c0b0d3" stroke-width="0.4"/><path d="M9 90 Q18.500 78 28 90" fill="#d7c6e4" stroke="#b9a9cd" stroke-width="0.6"/><rect x="28" y="102" width="10" height="48" fill="#d7c6e4" stroke="#b9a9cd" stroke-width="0.6"/><path d="M31.3 102 V150" stroke="#b9a9cd" stroke-width="0.5"/><path d="M34.7 102 V150" stroke="#b9a9cd" stroke-width="0.5"/><path d="M28 107.3 H38" stroke="#c0b0d3" stroke-width="0.4"/><path d="M28 112.7 H38" stroke="#c0b0d3" stroke-width="0.4"/><path d="M28 118.0 H38" stroke="#c0b0d3" stroke-width="0.4"/><path d="M28 123.3 H38" stroke="#c0b0d3" stroke-width="0.4"/><path d="M28 128.7 H38" stroke="#c0b0d3" stroke-width="0.4"/><path d="M28 134.0 H38" stroke="#c0b0d3" stroke-width="0.4"/><path d="M28 139.3 H38" stroke="#c0b0d3" stroke-width="0.4"/><path d="M28 144.7 H38" stroke="#c0b0d3" stroke-width="0.4"/><rect x="153" y="104" width="6" height="46" fill="#d7c6e4" stroke="#b9a9cd" stroke-width="0.6"/><path d="M156.0 104 V150" stroke="#b9a9cd" stroke-width="0.5"/><path d="M153 109.1 H159" stroke="#c0b0d3" stroke-width="0.4"/><path d="M153 114.2 H159" stroke="#c0b0d3" stroke-width="0.4"/><path d="M153 119.3 H159" stroke="#c0b0d3" stroke-width="0.4"/><path d="M153 124.4 H159" stroke="#c0b0d3" stroke-width="0.4"/><path d="M153 129.6 H159" stroke="#c0b0d3" stroke-width="0.4"/><path d="M153 134.7 H159" stroke="#c0b0d3" stroke-width="0.4"/><path d="M153 139.8 H159" stroke="#c0b0d3" stroke-width="0.4"/><path d="M153 144.9 H159" stroke="#c0b0d3" stroke-width="0.4"/><rect x="158" y="95" width="14" height="55" fill="#d7c6e4" stroke="#b9a9cd" stroke-width="0.6"/><path d="M161.5 95 V150" stroke="#b9a9cd" stroke-width="0.5"/><path d="M165.0 95 V150" stroke="#b9a9cd" stroke-width="0.5"/><path d="M168.5 95 V150" stroke="#b9a9cd" stroke-width="0.5"/><path d="M158 99.2 H172" stroke="#c0b0d3" stroke-width="0.4"/><path d="M158 103.5 H172" stroke="#c0b0d3" stroke-width="0.4"/><path d="M158 107.7 H172" stroke="#c0b0d3" stroke-width="0.4"/><path d="M158 111.9 H172" stroke="#c0b0d3" stroke-width="0.4"/><path d="M158 116.2 H172" stroke="#c0b0d3" stroke-width="0.4"/><path d="M158 120.4 H172" stroke="#c0b0d3" stroke-width="0.4"/><path d="M158 124.6 H172" stroke="#c0b0d3" stroke-width="0.4"/><path d="M158 128.8 H172" stroke="#c0b0d3" stroke-width="0.4"/><path d="M158 133.1 H172" stroke="#c0b0d3" stroke-width="0.4"/><path d="M158 137.3 H172" stroke="#c0b0d3" stroke-width="0.4"/><path d="M158 141.5 H172" stroke="#c0b0d3" stroke-width="0.4"/><path d="M158 145.8 H172" stroke="#c0b0d3" stroke-width="0.4"/><rect x="164" y="80" width="5" height="15" fill="#d7c6e4" stroke="#b9a9cd" stroke-width="0.6"/><path d="M166.5 80 V95" stroke="#b9a9cd" stroke-width="0.5"/><path d="M164 83.8 H169" stroke="#c0b0d3" stroke-width="0.4"/><path d="M164 87.5 H169" stroke="#c0b0d3" stroke-width="0.4"/><path d="M164 91.2 H169" stroke="#c0b0d3" stroke-width="0.4"/><rect x="175.5" y="70" width="5" height="80" fill="#d7c6e4" stroke="#b9a9cd" stroke-width="0.6"/><path d="M178.0 70 V150" stroke="#b9a9cd" stroke-width="0.5"/><path d="M175.5 74.4 H180.5" stroke="#c0b0d3" stroke-width="0.4"/><path d="M175.5 78.9 H180.5" stroke="#c0b0d3" stroke-width="0.4"/><path d="M175.5 83.3 H180.5" stroke="#c0b0d3" stroke-width="0.4"/><path d="M175.5 87.8 H180.5" stroke="#c0b0d3" stroke-width="0.4"/><path d="M175.5 92.2 H180.5" stroke="#c0b0d3" stroke-width="0.4"/><path d="M175.5 96.7 H180.5" stroke="#c0b0d3" stroke-width="0.4"/><path d="M175.5 101.1 H180.5" stroke="#c0b0d3" stroke-width="0.4"/><path d="M175.5 105.6 H180.5" stroke="#c0b0d3" stroke-width="0.4"/><path d="M175.5 110.0 H180.5" stroke="#c0b0d3" stroke-width="0.4"/><path d="M175.5 114.4 H180.5" stroke="#c0b0d3" stroke-width="0.4"/><path d="M175.5 118.9 H180.5" stroke="#c0b0d3" stroke-width="0.4"/><path d="M175.5 123.3 H180.5" stroke="#c0b0d3" stroke-width="0.4"/><path d="M175.5 127.8 H180.5" stroke="#c0b0d3" stroke-width="0.4"/><path d="M175.5 132.2 H180.5" stroke="#c0b0d3" stroke-width="0.4"/><path d="M175.5 136.7 H180.5" stroke="#c0b0d3" stroke-width="0.4"/><path d="M175.5 141.1 H180.5" stroke="#c0b0d3" stroke-width="0.4"/><path d="M175.5 145.6 H180.5" stroke="#c0b0d3" stroke-width="0.4"/><path d="M174 70 H182" stroke="#b4a3c9" stroke-width="0.7"/><rect x="181" y="112" width="9" height="38" fill="#d7c6e4" stroke="#b9a9cd" stroke-width="0.6"/><path d="M184.0 112 V150" stroke="#b9a9cd" stroke-width="0.5"/><path d="M187.0 112 V150" stroke="#b9a9cd" stroke-width="0.5"/><path d="M181 116.2 H190" stroke="#c0b0d3" stroke-width="0.4"/><path d="M181 120.4 H190" stroke="#c0b0d3" stroke-width="0.4"/><path d="M181 124.7 H190" stroke="#c0b0d3" stroke-width="0.4"/><path d="M181 128.9 H190" stroke="#c0b0d3" stroke-width="0.4"/><path d="M181 133.1 H190" stroke="#c0b0d3" stroke-width="0.4"/><path d="M181 137.3 H190" stroke="#c0b0d3" stroke-width="0.4"/><path d="M181 141.6 H190" stroke="#c0b0d3" stroke-width="0.4"/><path d="M181 145.8 H190" stroke="#c0b0d3" stroke-width="0.4"/><rect x="184" y="104" width="6" height="8" fill="#d7c6e4" stroke="#b9a9cd" stroke-width="0.6"/><path d="M187.0 104 V112" stroke="#b9a9cd" stroke-width="0.5"/><path d="M184 108.0 H190" stroke="#c0b0d3" stroke-width="0.4"/>
<path d="M0 150 H190" stroke="#bdaed0" stroke-width="0.6"/>
<path d="M1.0 150 V162" stroke="#bfb0d2" stroke-width="0.5" opacity="0.7"/><path d="M3.1 150 V174" stroke="#bfb0d2" stroke-width="0.5" opacity="0.7"/><path d="M5.2 150 V174" stroke="#bfb0d2" stroke-width="0.5" opacity="0.7"/><path d="M7.3 150 V162" stroke="#bfb0d2" stroke-width="0.5" opacity="0.7"/><path d="M9.4 150 V166" stroke="#bfb0d2" stroke-width="0.5" opacity="0.7"/><path d="M11.5 150 V174" stroke="#bfb0d2" stroke-width="0.5" opacity="0.7"/><path d="M13.6 150 V170" stroke="#bfb0d2" stroke-width="0.5" opacity="0.7"/><path d="M15.7 150 V174" stroke="#bfb0d2" stroke-width="0.5" opacity="0.7"/><path d="M17.8 150 V158" stroke="#bfb0d2" stroke-width="0.5" opacity="0.7"/><path d="M19.9 150 V174" stroke="#bfb0d2" stroke-width="0.5" opacity="0.7"/><path d="M22.0 150 V158" stroke="#bfb0d2" stroke-width="0.5" opacity="0.7"/><path d="M24.1 150 V170" stroke="#bfb0d2" stroke-width="0.5" opacity="0.7"/><path d="M26.2 150 V166" stroke="#bfb0d2" stroke-width="0.5" opacity="0.7"/><path d="M28.3 150 V174" stroke="#bfb0d2" stroke-width="0.5" opacity="0.7"/><path d="M30.4 150 V162" stroke="#bfb0d2" stroke-width="0.5" opacity="0.7"/><path d="M32.5 150 V162" stroke="#bfb0d2" stroke-width="0.5" opacity="0.7"/><path d="M34.6 150 V170" stroke="#bfb0d2" stroke-width="0.5" opacity="0.7"/><path d="M36.7 150 V174" stroke="#bfb0d2" stroke-width="0.5" opacity="0.7"/><path d="M38.8 150 V174" stroke="#bfb0d2" stroke-width="0.5" opacity="0.7"/><path d="M40.9 150 V170" stroke="#bfb0d2" stroke-width="0.5" opacity="0.7"/><path d="M43.0 150 V170" stroke="#bfb0d2" stroke-width="0.5" opacity="0.7"/><path d="M45.1 150 V162" stroke="#bfb0d2" stroke-width="0.5" opacity="0.7"/><path d="M47.2 150 V162" stroke="#bfb0d2" stroke-width="0.5" opacity="0.7"/><path d="M49.3 150 V162" stroke="#bfb0d2" stroke-width="0.5" opacity="0.7"/><path d="M51.4 150 V174" stroke="#bfb0d2" stroke-width="0.5" opacity="0.7"/><path d="M53.5 150 V170" stroke="#bfb0d2" stroke-width="0.5" opacity="0.7"/><path d="M55.6 150 V158" stroke="#bfb0d2" stroke-width="0.5" opacity="0.7"/><path d="M57.7 150 V158" stroke="#bfb0d2" stroke-width="0.5" opacity="0.7"/><path d="M59.8 150 V162" stroke="#bfb0d2" stroke-width="0.5" opacity="0.7"/><path d="M61.9 150 V174" stroke="#bfb0d2" stroke-width="0.5" opacity="0.7"/><path d="M64.0 150 V158" stroke="#bfb0d2" stroke-width="0.5" opacity="0.7"/><path d="M66.1 150 V166" stroke="#bfb0d2" stroke-width="0.5" opacity="0.7"/><path d="M68.2 150 V158" stroke="#bfb0d2" stroke-width="0.5" opacity="0.7"/><path d="M70.3 150 V166" stroke="#bfb0d2" stroke-width="0.5" opacity="0.7"/><path d="M72.4 150 V170" stroke="#bfb0d2" stroke-width="0.5" opacity="0.7"/><path d="M74.5 150 V174" stroke="#bfb0d2" stroke-width="0.5" opacity="0.7"/><path d="M76.6 150 V170" stroke="#bfb0d2" stroke-width="0.5" opacity="0.7"/><path d="M114.4 150 V170" stroke="#bfb0d2" stroke-width="0.5" opacity="0.7"/><path d="M116.5 150 V170" stroke="#bfb0d2" stroke-width="0.5" opacity="0.7"/><path d="M118.6 150 V174" stroke="#bfb0d2" stroke-width="0.5" opacity="0.7"/><path d="M120.7 150 V170" stroke="#bfb0d2" stroke-width="0.5" opacity="0.7"/><path d="M122.8 150 V162" stroke="#bfb0d2" stroke-width="0.5" opacity="0.7"/><path d="M124.9 150 V166" stroke="#bfb0d2" stroke-width="0.5" opacity="0.7"/><path d="M127.0 150 V158" stroke="#bfb0d2" stroke-width="0.5" opacity="0.7"/><path d="M129.1 150 V158" stroke="#bfb0d2" stroke-width="0.5" opacity="0.7"/><path d="M131.2 150 V162" stroke="#bfb0d2" stroke-width="0.5" opacity="0.7"/><path d="M133.3 150 V170" stroke="#bfb0d2" stroke-width="0.5" opacity="0.7"/><path d="M135.4 150 V162" stroke="#bfb0d2" stroke-width="0.5" opacity="0.7"/><path d="M137.5 150 V166" stroke="#bfb0d2" stroke-width="0.5" opacity="0.7"/><path d="M139.6 150 V170" stroke="#bfb0d2" stroke-width="0.5" opacity="0.7"/><path d="M141.7 150 V166" stroke="#bfb0d2" stroke-width="0.5" opacity="0.7"/><path d="M143.8 150 V170" stroke="#bfb0d2" stroke-width="0.5" opacity="0.7"/><path d="M145.9 150 V174" stroke="#bfb0d2" stroke-width="0.5" opacity="0.7"/><path d="M148.0 150 V170" stroke="#bfb0d2" stroke-width="0.5" opacity="0.7"/><path d="M150.1 150 V174" stroke="#bfb0d2" stroke-width="0.5" opacity="0.7"/><path d="M152.2 150 V166" stroke="#bfb0d2" stroke-width="0.5" opacity="0.7"/><path d="M154.3 150 V174" stroke="#bfb0d2" stroke-width="0.5" opacity="0.7"/><path d="M156.4 150 V174" stroke="#bfb0d2" stroke-width="0.5" opacity="0.7"/><path d="M158.5 150 V170" stroke="#bfb0d2" stroke-width="0.5" opacity="0.7"/><path d="M160.6 150 V174" stroke="#bfb0d2" stroke-width="0.5" opacity="0.7"/><path d="M162.7 150 V162" stroke="#bfb0d2" stroke-width="0.5" opacity="0.7"/><path d="M164.8 150 V166" stroke="#bfb0d2" stroke-width="0.5" opacity="0.7"/><path d="M166.9 150 V158" stroke="#bfb0d2" stroke-width="0.5" opacity="0.7"/><path d="M169.0 150 V166" stroke="#bfb0d2" stroke-width="0.5" opacity="0.7"/><path d="M171.1 150 V174" stroke="#bfb0d2" stroke-width="0.5" opacity="0.7"/><path d="M173.2 150 V162" stroke="#bfb0d2" stroke-width="0.5" opacity="0.7"/><path d="M175.3 150 V166" stroke="#bfb0d2" stroke-width="0.5" opacity="0.7"/><path d="M177.4 150 V174" stroke="#bfb0d2" stroke-width="0.5" opacity="0.7"/><path d="M179.5 150 V174" stroke="#bfb0d2" stroke-width="0.5" opacity="0.7"/><path d="M181.6 150 V174" stroke="#bfb0d2" stroke-width="0.5" opacity="0.7"/><path d="M183.7 150 V158" stroke="#bfb0d2" stroke-width="0.5" opacity="0.7"/><path d="M185.8 150 V162" stroke="#bfb0d2" stroke-width="0.5" opacity="0.7"/><path d="M187.9 150 V174" stroke="#bfb0d2" stroke-width="0.5" opacity="0.7"/><path d="M190.0 150 V166" stroke="#bfb0d2" stroke-width="0.5" opacity="0.7"/>
<path d="M82.700 149 H108.700 L109.200 162.700 L113.200 171.700 H77.600 L82.200 162.700 Z" fill="#d5d5dc"/>
<rect x="82.700" y="149" width="26" height="8" fill="#dedee4"/>
<path d="M82.600 156.800 H108.800 L109.200 162.700 H82.200 Z" fill="#babac3"/>
<rect x="38" y="15.500" width="115" height="133.500" rx="4" fill="#505968"/>
<rect x="43" y="21" width="105" height="119" fill="#4a5261"/>
<path d="M38 140.200 H153 V146 Q153 149 150 149 H41 Q38 149 38 146 Z" fill="url(#chG)"/>
<ellipse cx="143" cy="144.600" rx="2.600" ry="1.800" fill="none" stroke="#3a3f48" stroke-width="1.100"/>
<path d="M136 146.500 L137.500 142.500" stroke="#3a3f48" stroke-width="0.8"/>
<rect x="52.700" y="43" width="84.400" height="96.500" fill="#fbfbfd"/>
<rect x="61" y="46.500" width="4.500" height="93" fill="#c9c4dc"/>
<rect x="64.500" y="38.200" width="59" height="7.800" fill="#86a6d0"/>
<path d="M65.5 38.500 V45.500" stroke="#5f82b3" stroke-width="0.8"/><path d="M68.5 38.500 V45.500" stroke="#5f82b3" stroke-width="0.8"/><path d="M71.5 38.500 V45.500" stroke="#5f82b3" stroke-width="0.8"/><path d="M74.5 38.500 V45.500" stroke="#5f82b3" stroke-width="0.8"/><path d="M77.5 38.500 V45.500" stroke="#5f82b3" stroke-width="0.8"/><path d="M80.5 38.500 V45.500" stroke="#5f82b3" stroke-width="0.8"/><path d="M83.5 38.500 V45.500" stroke="#5f82b3" stroke-width="0.8"/><path d="M86.5 38.500 V45.500" stroke="#5f82b3" stroke-width="0.8"/><path d="M89.5 38.500 V45.500" stroke="#5f82b3" stroke-width="0.8"/><path d="M92.5 38.500 V45.500" stroke="#5f82b3" stroke-width="0.8"/><path d="M95.5 38.500 V45.500" stroke="#5f82b3" stroke-width="0.8"/><path d="M98.5 38.500 V45.500" stroke="#5f82b3" stroke-width="0.8"/><path d="M101.5 38.500 V45.500" stroke="#5f82b3" stroke-width="0.8"/><path d="M104.5 38.500 V45.500" stroke="#5f82b3" stroke-width="0.8"/><path d="M107.5 38.500 V45.500" stroke="#5f82b3" stroke-width="0.8"/><path d="M110.5 38.500 V45.500" stroke="#5f82b3" stroke-width="0.8"/><path d="M113.5 38.500 V45.500" stroke="#5f82b3" stroke-width="0.8"/><path d="M116.5 38.500 V45.500" stroke="#5f82b3" stroke-width="0.8"/><path d="M119.5 38.500 V45.500" stroke="#5f82b3" stroke-width="0.8"/><path d="M122.5 38.500 V45.500" stroke="#5f82b3" stroke-width="0.8"/>
<rect x="65.500" y="46" width="71.600" height="93.500" fill="#fff"/>
<rect x="72.200" y="56.800" width="19.300" height="17.700" fill="#d3d6dc" stroke="#5a5f68" stroke-width="0.8"/>
<path d="M78 72 C76 66 77 59.500 82 59.500 C87 59.500 88 64 86 68 L87 72 Z" fill="#7d828c"/>
<path d="M79.500 62 C81 64 81.500 67 80.500 71 M83.500 61 C84.500 64 84 67 84.500 70" stroke="#d3d6dc" stroke-width="0.7" fill="none"/>
<path d="M96 57.9 H127.8" stroke="#353a44" stroke-width="1.25"/><path d="M96 63.5 H127.8" stroke="#353a44" stroke-width="1.25"/><path d="M96 68.7 H127.8" stroke="#353a44" stroke-width="1.25"/><path d="M96 73.8 H118.4" stroke="#353a44" stroke-width="1.25"/><path d="M72.8 80.1 H127.8" stroke="#353a44" stroke-width="1.25"/><path d="M72.8 85.9 H127.8" stroke="#353a44" stroke-width="1.25"/><path d="M72.8 91.5 H127.8" stroke="#353a44" stroke-width="1.25"/><path d="M72.8 97.1 H127.8" stroke="#353a44" stroke-width="1.25"/><path d="M72.8 113.9 H127.8" stroke="#353a44" stroke-width="1.25"/><path d="M72.8 119.1 H127.8" stroke="#353a44" stroke-width="1.25"/><path d="M72.8 129.2 H127.8" stroke="#353a44" stroke-width="1.25"/><path d="M72.8 134.4 H127.8" stroke="#353a44" stroke-width="1.25"/><path d="M83 102.9 H91.5" stroke="#353a44" stroke-width="1.25"/><path d="M100 102.9 H119.5" stroke="#353a44" stroke-width="1.25"/><path d="M83 108.5 H127.8" stroke="#353a44" stroke-width="1.25"/><path d="M72.8 124 H88.5" stroke="#353a44" stroke-width="1.25"/><path d="M100 124 H127.8" stroke="#353a44" stroke-width="1.25"/>
<path d="M73 102.900 H79 M76 102.900 V109" stroke="#3d424c" stroke-width="1.300"/>
<rect x="73" y="89" width="4.500" height="4" fill="#9aa0ae"/>
<rect x="39.300" y="171.700" width="114.100" height="6.500" fill="#e6e1ee"/>
<rect x="39.300" y="178.200" width="114.100" height="5.200" fill="#cdc6da"/>
<rect x="143.700" y="183.400" width="5.200" height="11" fill="#b6aad1"/>
<rect x="44" y="182.800" width="100" height="16" fill="#cfc4de"/>
<path d="M51.500 199 H59 L56.500 214 H49 Z" fill="#7a748e"/>
<path d="M59 199 H63 L62 214 H58.500 Z" fill="#aaa2be"/>
<path d="M134 199 H141.500 L144 214 H136.500 Z" fill="#7a748e"/>
<path d="M130 199 H134 L134.500 214 H131 Z" fill="#aaa2be"/>
<rect x="75" y="202.500" width="44.500" height="3.200" fill="#6c6782"/>
<rect x="44.200" y="177.200" width="99.800" height="22.200" rx="5" fill="#fdfcfe"/>
<g fill="none" stroke="#3a3f48" stroke-width="1"><circle cx="57" cy="185.500" r="2.600"/><path d="M52.500 191.500 H61.500 M53.500 189.200 H60.500 M59.600 185.500 V189"/></g>
<text x="68.500" y="192.300" font-family="Liberation Sans, sans-serif" font-size="12.500" fill="#2d323b" textLength="67.500" lengthAdjust="spacingAndGlyphs">Art Bente./</text>
</svg>
<!--END-->
</body></html>
